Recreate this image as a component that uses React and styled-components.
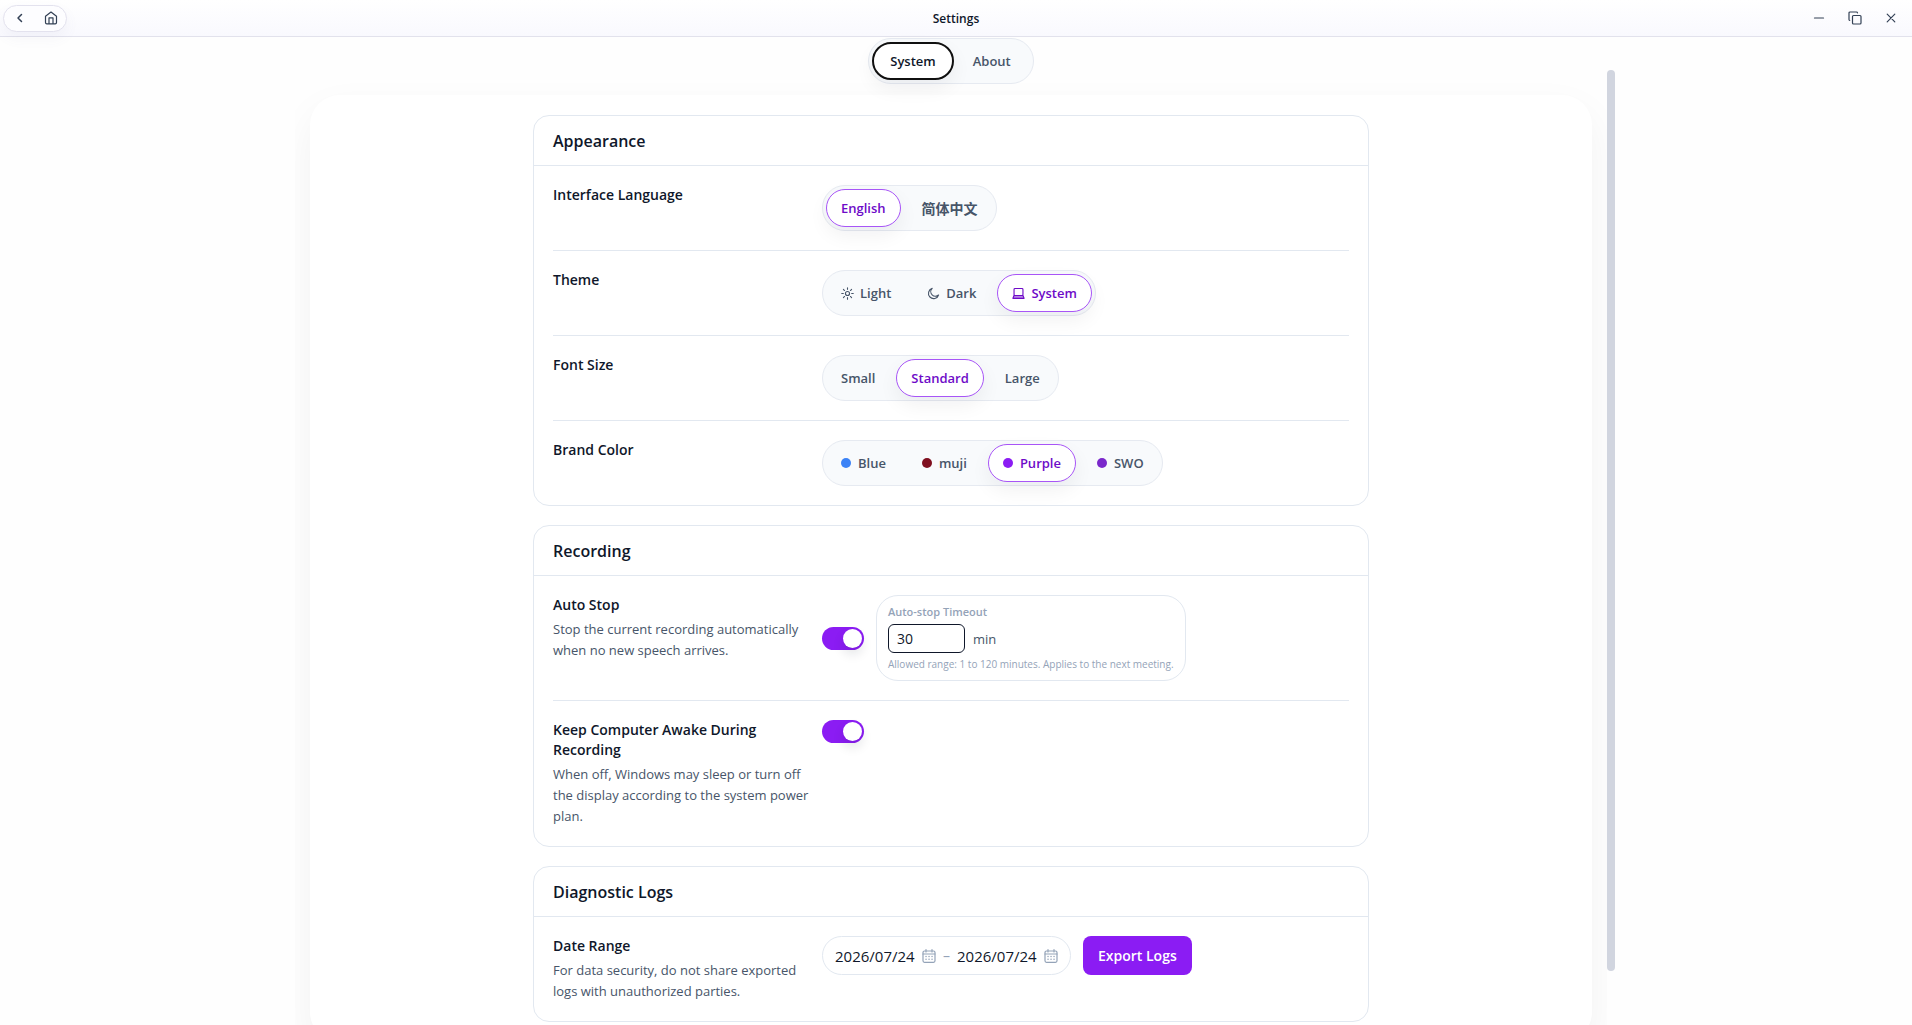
import React, { useState } from 'react';
import styled, { createGlobalStyle, css } from 'styled-components';

const GlobalStyle = createGlobalStyle`
  * {
    box-sizing: border-box;
  }

  html, body, #root {
    height: 100%;
  }

  body {
    margin: 0;
    overflow: hidden;
    background: #fefefe;
    color: #0f172a;
    font-family: 'Segoe UI', 'Open Sans', 'Noto Sans CJK SC', sans-serif;
    font-size: 14px;
  }

  button, input {
    font: inherit;
    color: inherit;
  }

  h1, h2, h3, p {
    margin: 0;
  }
`;

const Window = styled.div`
  display: flex;
  flex-direction: column;
  height: 100vh;
`;

const TitleBar = styled.header`
  display: grid;
  grid-template-columns: 1fr auto 1fr;
  align-items: center;
  flex: none;
  height: 37px;
  padding: 0 3px;
  background: linear-gradient(#ffffff, #f9f9fe);
  border-bottom: 1px solid #e2e2ec;
`;

const Title = styled.h1`
  font-size: 12px;
  font-weight: 600;
`;

const NavPill = styled.nav`
  display: flex;
  justify-self: start;
  height: 27px;
  border: 1px solid #e3e2ee;
  border-radius: 14px;
  background: #fdfdff;
  box-shadow: 0 6px 14px rgba(99, 102, 160, 0.06);
`;

const IconButton = styled.button`
  display: flex;
  align-items: center;
  justify-content: center;
  width: ${props => props.$width}px;
  padding: 0;
  border: none;
  background: none;
  color: #334155;
`;

const WindowControls = styled.div`
  display: flex;
  justify-self: end;
  height: 27px;
`;

const Body = styled.div`
  display: flex;
  justify-content: center;
  flex: 1;
  min-height: 0;
  padding-right: 2px;
`;

const Content = styled.div`
  display: flex;
  flex-direction: column;
  flex: 1;
  min-width: 0;
  max-width: 1312px;
`;

const TabBar = styled.div`
  display: flex;
  justify-content: center;
  flex: none;
  height: 33px;
  padding-top: 1px;
`;

const Segments = styled.div`
  position: relative;
  display: flex;
  flex: none;
  gap: ${props => props.$gap || 0}px;
  width: fit-content;
  height: 46px;
  padding: 3px;
  border: 1px solid #e6eaf1;
  border-radius: 23px;
  background: #f8fafc;
`;

const Segment = styled.button`
  display: flex;
  align-items: center;
  gap: 6px;
  height: 38px;
  padding: 0 14px;
  border: 1px solid transparent;
  border-radius: 19px;
  background: none;
  color: #475569;
  font-size: 13px;
  font-weight: 600;
  white-space: nowrap;

  &:lang(zh) {
    font-size: 14px;
  }

  ${props => props.$active && css`
    border-color: #a855f7;
    background: #ffffff;
    color: #6e0bc8;
    box-shadow: 0 8px 20px rgba(15, 23, 42, 0.06);
  `}
`;

const PageTab = styled(Segment)`
  padding: 0 18px;

  ${props => props.$active && css`
    padding: 0 16px;
    border: 2px solid #101010;
    color: #0f172a;
  `}
`;

const Dot = styled.span`
  width: 10px;
  height: 10px;
  margin-right: 1px;
  border-radius: 50%;
  background: ${props => props.$color};
`;

const ScrollArea = styled.main`
  flex: 1;
  min-height: 0;
  padding: 25px 15px 0;
  overflow-y: auto;
  scrollbar-width: none;
`;

const ScrollTrack = styled.div`
  flex: none;
  width: 8px;
  padding: 33px 0 54px;
`;

const ScrollThumb = styled.div`
  height: 100%;
  border-radius: 4px;
  background: #d1d5df;
`;

const Panel = styled.div`
  display: flex;
  flex-direction: column;
  align-items: center;
  gap: 19px;
  padding: 20px;
  border-radius: 30px;
  background: #ffffff;
  box-shadow: 0 16px 40px rgba(15, 23, 42, 0.05);
`;

const Card = styled.section`
  width: 100%;
  max-width: 836px;
  border: 1px solid #e2e8f0;
  border-radius: 16px;
  background: #ffffff;
`;

const CardTitle = styled.h2`
  display: flex;
  align-items: center;
  height: 50px;
  padding: 0 19px;
  border-bottom: 1px solid #e2e8f0;
  font-size: 16px;
  font-weight: 600;
`;

const Row = styled.div`
  display: grid;
  grid-template-columns: 260px 1fr;
  column-gap: 9px;
  margin: 0 19px;
  padding: 19px 0;

  & + & {
    border-top: 1px solid #e2e8f0;
  }
`;

const RowLabel = styled.h3`
  display: block;
  font-size: 14px;
  font-weight: 600;
  line-height: 20px;
`;

const RowHint = styled.p`
  margin-top: 4px;
  color: #475569;
  font-size: 13px;
  line-height: 21px;
`;

const Controls = styled.div`
  display: flex;
  align-items: ${props => props.$align || 'center'};
  gap: 12px;
`;

const Toggle = styled.input`
  flex: none;
  appearance: none;
  width: 42px;
  height: 23px;
  margin: 0;
  border-radius: 12px;
  background: #8b1cf3;

  &::before {
    content: '';
    display: block;
    width: 19px;
    height: 19px;
    margin: 2px 2px 2px 21px;
    border-radius: 50%;
    background: #ffffff;
    box-shadow: 0 6px 12px rgba(15, 23, 42, 0.12);
  }

  &:not(:checked) {
    background: #cbd5e1;
  }

  &:not(:checked)::before {
    margin-left: 2px;
  }
`;

const TimeoutBox = styled.div`
  display: flex;
  flex-direction: column;
  height: 86px;
  padding: 8px 11px;
  border: 1px solid #e2e8f0;
  border-radius: 22px;
  color: #94a3b8;
`;

const TimeoutLabel = styled.label`
  font-size: 11px;
  font-weight: 600;
  line-height: 16px;
`;

const TimeoutLine = styled.div`
  display: flex;
  align-items: center;
  gap: 8px;
  margin: 4px 0;
  color: #475569;
  font-size: 13px;
`;

const NumberInput = styled.input`
  width: 77px;
  height: 29px;
  padding: 0 8px;
  border: 1px solid #0f172a;
  border-radius: 6px;
  background: #ffffff;
  color: #0f172a;
  font-size: 14px;
`;

const TimeoutHint = styled.p`
  font-size: 10px;
  line-height: 14px;
`;

const DateRange = styled.div`
  display: flex;
  align-items: center;
  gap: 7px;
  height: 39px;
  padding: 0 12px;
  border: 1px solid #e2e8f0;
  border-radius: 20px;
  color: #94a3b8;
`;

const DateField = styled.label`
  display: flex;
  align-items: center;
  gap: 7px;
`;

const DateInput = styled.input`
  width: 80px;
  padding: 0;
  border: none;
  background: none;
  color: #0f172a;
  font-size: 15px;
`;

const ExportButton = styled.button`
  height: 39px;
  padding: 0 15px;
  border: none;
  border-radius: 8px;
  background: #8b1cf3;
  color: #ffffff;
  font-size: 14px;
  font-weight: 600;
  white-space: nowrap;
`;

const Icon = ({ size = 14, stroke = 1.2, children }) => (
  <svg width={size} height={size} viewBox="0 0 14 14" fill="none" stroke="currentColor"
    strokeWidth={stroke} strokeLinecap="round" strokeLinejoin="round" aria-hidden="true">
    {children}
  </svg>
);

const BackIcon = () => (
  <Icon stroke={1.5}><path d="M8.500 3.500 5 7l3.500 3.500" /></Icon>
);

const HomeIcon = () => (
  <Icon>
    <path d="M1.500 5.200 7 1l5.500 4.200V11.500a1.300 1.300 0 0 1-1.300 1.300H2.800A1.300 1.300 0 0 1 1.500 11.500z" />
    <path d="M5 12.500V6.800h4v5.700" />
  </Icon>
);

const SunIcon = () => (
  <Icon size={13}>
    <circle cx="7" cy="7" r="2.200" />
    <path d="M7 .8v1.700M7 11.500v1.700M.8 7h1.700M11.500 7h1.700M2.600 2.600l1.200 1.200M10.200 10.200l1.200 1.200M2.600 11.400l1.200-1.200M10.200 3.800l1.200-1.200" />
  </Icon>
);

const MoonIcon = () => (
  <Icon size={13}>
    <path d="M5.600 1.500A5.600 5.600 0 1 0 12.500 8.600 4.600 4.600 0 0 1 5.600 1.500z" />
  </Icon>
);

const LaptopIcon = () => (
  <Icon size={13}>
    <rect x="2.200" y="1.600" width="9.600" height="7.600" rx="1" />
    <path d="M2.200 9.200 1 12.200h12L11.800 9.200z" fill="currentColor" fillOpacity="0.5" />
  </Icon>
);

const CalendarIcon = () => (
  <Icon>
    <rect x="1" y="2" width="12" height="11.300" rx="1.500" />
    <path d="M1 5h12M4 .6v2.400M10 .6v2.400" />
    <path d="M4 7.500h.1M7 7.500h.1M10 7.500h.1M4 10.300h.1M7 10.300h.1M10 10.300h.1" strokeWidth="1.400" />
  </Icon>
);

const languages = [
  { id: 'en', label: 'English', lang: 'en' },
  { id: 'zh', label: '简体中文', lang: 'zh' },
];

const themes = [
  { id: 'light', label: 'Light', icon: <SunIcon /> },
  { id: 'dark', label: 'Dark', icon: <MoonIcon /> },
  { id: 'system', label: 'System', icon: <LaptopIcon /> },
];

const fontSizes = [
  { id: 'small', label: 'Small' },
  { id: 'standard', label: 'Standard' },
  { id: 'large', label: 'Large' },
];

const brandColors = [
  { id: 'blue', label: 'Blue', icon: <Dot $color="#3b82f6" /> },
  { id: 'muji', label: 'muji', icon: <Dot $color="#7f0f1f" /> },
  { id: 'purple', label: 'Purple', icon: <Dot $color="#8b1cf3" /> },
  { id: 'swo', label: 'SWO', icon: <Dot $color="#7a28cb" /> },
];

const OptionRow = ({ label, options, initial }) => {
  const [value, setValue] = useState(initial);

  return (
    <Row>
      <RowLabel>{label}</RowLabel>
      <Segments $gap={6} role="group" aria-label={label}>
        {options.map(option => (
          <Segment
            key={option.id}
            type="button"
            lang={option.lang}
            $active={option.id === value}
            aria-pressed={option.id === value}
            onClick={() => setValue(option.id)}
          >
            {option.icon}
            {option.label}
          </Segment>
        ))}
      </Segments>
    </Row>
  );
};

const App = () => {
  const [tab, setTab] = useState('System');

  return (
    <Window>
      <GlobalStyle />
      <TitleBar>
        <NavPill>
          <IconButton $width={31} aria-label="Back"><BackIcon /></IconButton>
          <IconButton $width={31} aria-label="Home"><HomeIcon /></IconButton>
        </NavPill>
        <Title>Settings</Title>
        <WindowControls>
          <IconButton $width={36} aria-label="Minimize">
            <Icon><path d="M2.500 7h9" /></Icon>
          </IconButton>
          <IconButton $width={36} aria-label="Restore">
            <Icon>
              <rect x="4.500" y="4.500" width="8.500" height="8.500" rx="1" />
              <path d="M1.800 9.500A1 1 0 0 1 1 8.500V2a1 1 0 0 1 1-1h6.500a1 1 0 0 1 1 .8" />
            </Icon>
          </IconButton>
          <IconButton $width={36} aria-label="Close">
            <Icon><path d="m3.200 3.200 7.600 7.600M10.800 3.200l-7.600 7.600" /></Icon>
          </IconButton>
        </WindowControls>
      </TitleBar>

      <Body>
        <Content>
          <TabBar>
            <Segments>
              {['System', 'About'].map(name => (
                <PageTab key={name} type="button" $active={name === tab} onClick={() => setTab(name)}>
                  {name}
                </PageTab>
              ))}
            </Segments>
          </TabBar>

          <ScrollArea>
            <Panel>
              <Card>
                <CardTitle>Appearance</CardTitle>
                <OptionRow label="Interface Language" options={languages} initial="en" />
                <OptionRow label="Theme" options={themes} initial="system" />
                <OptionRow label="Font Size" options={fontSizes} initial="standard" />
                <OptionRow label="Brand Color" options={brandColors} initial="purple" />
              </Card>

              <Card>
                <CardTitle>Recording</CardTitle>
                <Row>
                  <div>
                    <RowLabel as="label" htmlFor="auto-stop">Auto Stop</RowLabel>
                    <RowHint>Stop the current recording automatically when no new speech arrives.</RowHint>
                  </div>
                  <Controls>
                    <Toggle id="auto-stop" type="checkbox" role="switch" defaultChecked />
                    <TimeoutBox>
                      <TimeoutLabel htmlFor="timeout">Auto-stop Timeout</TimeoutLabel>
                      <TimeoutLine>
                        <NumberInput id="timeout" inputMode="numeric" defaultValue="30" />
                        min
                      </TimeoutLine>
                      <TimeoutHint>Allowed range: 1 to 120 minutes. Applies to the next meeting.</TimeoutHint>
                    </TimeoutBox>
                  </Controls>
                </Row>
                <Row>
                  <div>
                    <RowLabel as="label" htmlFor="keep-awake">Keep Computer Awake During Recording</RowLabel>
                    <RowHint>When off, Windows may sleep or turn off the display according to the system power plan.</RowHint>
                  </div>
                  <Controls $align="flex-start">
                    <Toggle id="keep-awake" type="checkbox" role="switch" defaultChecked />
                  </Controls>
                </Row>
              </Card>

              <Card>
                <CardTitle>Diagnostic Logs</CardTitle>
                <Row>
                  <div>
                    <RowLabel>Date Range</RowLabel>
                    <RowHint>For data security, do not share exported logs with unauthorized parties.</RowHint>
                  </div>
                  <Controls $align="flex-start">
                    <DateRange>
                      <DateField>
                        <DateInput aria-label="Start date" defaultValue="2026/07/24" />
                        <CalendarIcon />
                      </DateField>
                      –
                      <DateField>
                        <DateInput aria-label="End date" defaultValue="2026/07/24" />
                        <CalendarIcon />
                      </DateField>
                    </DateRange>
                    <ExportButton type="button">Export Logs</ExportButton>
                  </Controls>
                </Row>
              </Card>
            </Panel>
          </ScrollArea>
        </Content>
        <ScrollTrack aria-hidden="true">
          <ScrollThumb />
        </ScrollTrack>
      </Body>
    </Window>
  );
};

export default App;
